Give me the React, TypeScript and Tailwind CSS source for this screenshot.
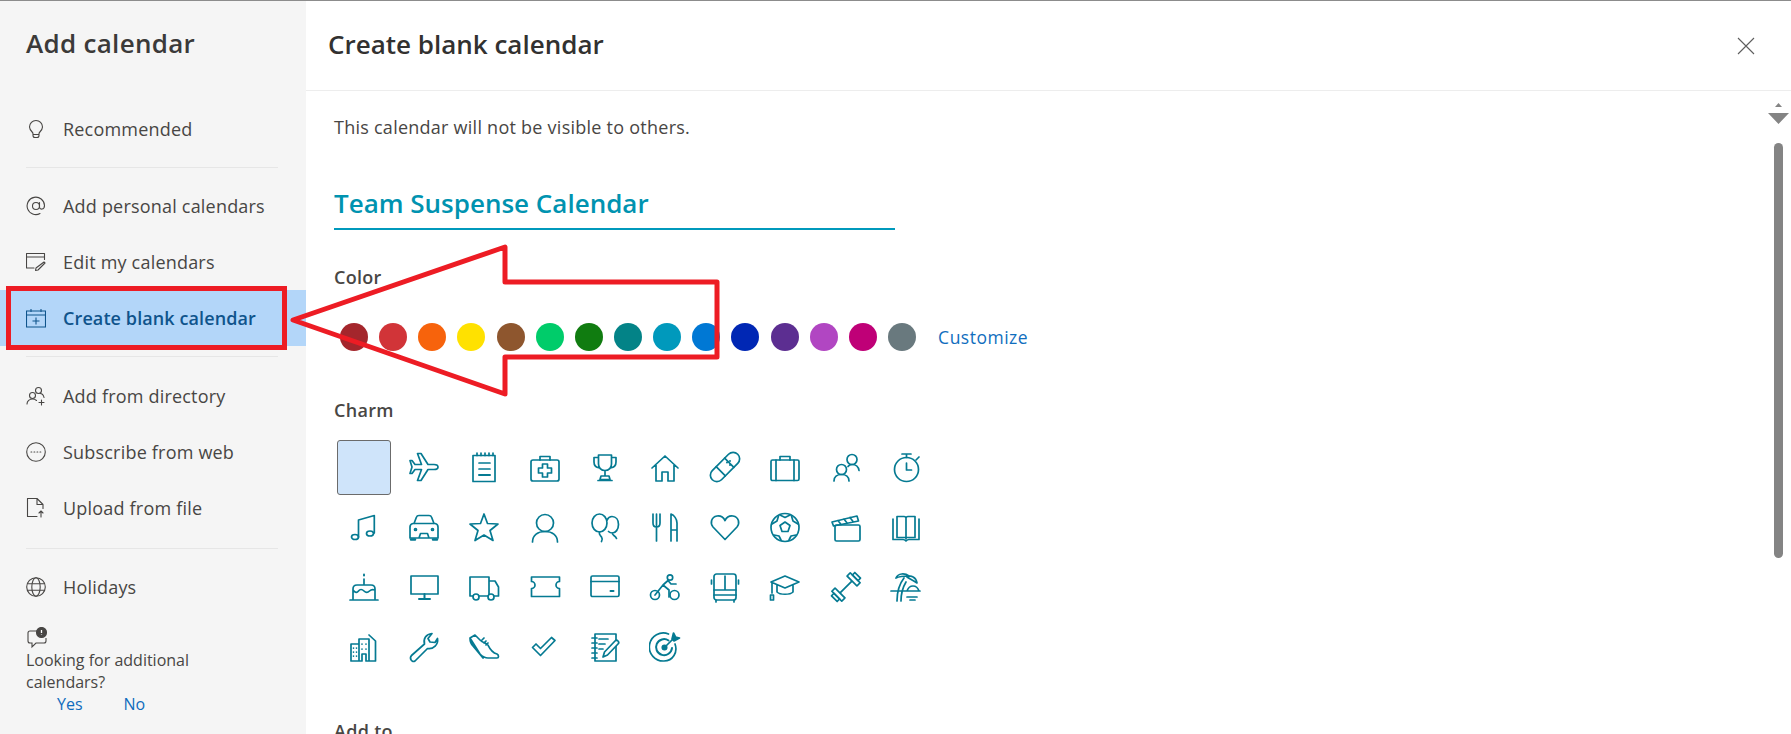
import React from "react";

const S = ({ children, fill }: { children: React.ReactNode; fill?: boolean }) => (
  <svg width="32" height="32" viewBox="0 0 32 32" fill={fill ? "#057a92" : "none"} stroke="#057a92" strokeWidth="1.700" strokeLinejoin="round" strokeLinecap="round">
    {children}
  </svg>
);

const charms: React.ReactNode[] = [
  null,
  <path d="M30 16c0-1.500-2-2.500-4-2.500h-6L13 2.500H9.500l4 11H7L4 9.500H2L4 16l-2 6.500h2l3-4h6.500l-4 11H13l7-11h6c2 0 4-1 4-2.500z" />,
  <><rect x="5" y="4.500" width="22" height="26" /><path d="M9 2v2.500M13 2v2.500M17 2v2.500M21 2v2.500M25 2v2.500M11 12h11M11 18h11" /><path d="M11 24h11" strokeWidth="2" /></>,
  <><rect x="2" y="9" width="28" height="21" rx="2" /><path d="M11 9V5.500h10V9M13.500 13h5v4h4v5h-4v4h-5v-4h-4v-5h4z" /></>,
  <><path d="M9.500 4h13v9c0 3.500-2.500 6.500-6.500 6.500S9.500 16.500 9.500 13zM9.500 6.500H5V11c0 3 2 5.500 5.500 6M22.500 6.500H27V11c0 3-2 5.500-5.500 6M16 19.500V25M12 25h8l1 3.500H11zM9 29.500h14" /></>,
  <path d="M3 17 16 5l13 12M7 14v16h6v-9h6v9h6V14" />,
  <><g transform="rotate(-45 16 16)"><rect x="-2" y="9.500" width="36" height="13" rx="6.500" /><path d="M10 9.500v13M22 9.500v13" /></g><path d="M18 11.500v.1M21 10v.1M21 14v.1" strokeWidth="2" /></>,
  <><rect x="2" y="9" width="28" height="20.500" rx="1.500" /><path d="M11 9V5.500h10V9M7 9v20.500M25 9v20.500" /></>,
  <><circle cx="22" cy="8.500" r="5" /><circle cx="11.500" cy="18.500" r="5" /><path d="M4 30c0-4 3-6.500 7.500-6.500S19 26 19 30M18 15.500c1-1.500 2.500-2 4-2 4 0 6.500 2.500 7 6" /></>,
  <><circle cx="16.500" cy="18.500" r="12" /><path d="M12 3h9M16.500 3v3.500M16.500 12v7h5M26 9l3-3" /></>,
  <><ellipse cx="7" cy="26" rx="3.500" ry="2.500" /><ellipse cx="22" cy="22.500" rx="3.500" ry="2.500" /><path d="M10.500 26V9l15.800-4.500V22" /></>,
  <><path d="M6 12.500 8.500 6Q9 4.500 11 4.500h10q2 0 2.500 1.500L26 12.500M5 12.500h22q3 .5 3 3.500v11H2V16q0-3 3-3.500zM11 27l1.500-4.500h7L21 27" /><path d="M3 28.500h4M25 28.500h4" strokeWidth="2.500" /><circle cx="7.500" cy="18.500" r="1" /><circle cx="24.500" cy="18.500" r="1" /></>,
  <path d="m16 3 3.500 9.500L30 13l-8 6.500 3 10-9-5.500-9 5.500 3-10L2 13l10.500-.5z" />,
  <><circle cx="16" cy="12" r="8.500" /><path d="M3.500 31c0-7 5.500-10.500 12.500-10.500S28.500 24 28.500 31" /></>,
  <><ellipse cx="10.500" cy="12" rx="7.500" ry="9" /><path d="M18 9c1-2 2.500-3.500 5-3.500 4 0 6.500 3.500 6.500 8 0 5-3 8.500-6 8.500-1.500 0-3-.5-4-1.500M10.500 21c-1 3 1 3.500 2 5s1 3 0 4.500M23.500 22c-1 2 3 2.500 4 5.500" /></>,
  <><path d="M4 3v9c0 3 2 4 3.500 4S11 15 11 12V3M7.500 3v27M22 30V3c3 1 6 5 6 9v7h-6M28 19v11" /></>,
  <path d="M16 28.500 4 16C1 12.500 2 6 8 5c3.500-.5 6.500 1.500 8 4.500C17.500 6.500 20.500 4.500 24 5c6 1 7 7.500 4 11z" />,
  <><circle cx="16" cy="16.500" r="14" /><path d="m16 11 5 3.500-2 6h-6l-2-6zM11 4l5 2.500L21 4M3 13l5-3 1.500-5M29 13l-5-3-1.500-5M5 24l5 1 2 4M27 24l-5 1-2 4" /></>,
  <><rect x="5" y="14" width="25" height="16" rx="1.500" /><path d="m2 11 25-6 1.500 5-25 5zM8 9.500l3 4M14 8l3 4M20 6.500l3 4" /></>,
  <><path d="M7 5.500h7c1 0 2 1 2 2 0-1 1-2 2-2h7v21H7zM16 8v20" /><path d="M3 8v20.500h10c1 0 2 .5 3 1.500 1-1 2-1.500 3-1.500h10V8" /></>,
  <><path d="M5 28V18q0-4 4-4h14q4 0 4 4v10M2 29h28M16 14V8M5 19c2.500 3 4 3 5.500 1s3.500-2 5.500 0 3.500 2 5.500 0 3-2 5.500-1" /><path d="M16 3.500v1" strokeWidth="2" /></>,
  <><rect x="3" y="5" width="27" height="18" /><path d="M16.500 23v4M11 28h11" strokeWidth="2" /></>,
  <><path d="M2 6h19v19H2zM21 10h6l3.500 6v9H21" /><circle cx="8" cy="26" r="3" fill="#fff" /><circle cx="23" cy="26" r="3" fill="#fff" /></>,
  <path d="M2.500 6h28v4.500a3.500 3.500 0 0 0 0 7v8h-28v-8a3.500 3.500 0 0 0 0-7z" />,
  <><rect x="2" y="5" width="28" height="20.500" rx="1.500" /><path d="M2 10.500h28" /><path d="M21.500 20h3" strokeWidth="2" /></>,
  <><circle cx="6" cy="24" r="4.500" /><circle cx="25.500" cy="24" r="4.500" /><circle cx="21" cy="6.500" r="2.700" /><path d="M6 24l8-10 5-4.500 3 3.500h5M14 14l6 5v7" /></>,
  <><rect x="5" y="3" width="22" height="26" rx="2.500" /><path d="M5 19h22M16 5v14M2.500 9v4M29.500 9v4M7 29v2M25 29v2M5 24h22" /></>,
  <><path d="M16 5 30 11l-14 6-14-6zM8 14v7c3 3 13 3 16 0v-7M3 11v11" /><rect x="1.500" y="24" width="3" height="5" /></>,
  <g transform="rotate(-45 16 16)"><path d="M8 16h16" /><rect x="3" y="9" width="4.500" height="14" /><rect x="24.500" y="9" width="4.500" height="14" /><rect x="-.5" y="12" width="3.500" height="8" /><rect x="29" y="12" width="3.500" height="8" /></g>,
  <><path d="M7 30c0-9 1.500-16 7-23M11 30c0-8 2-14 5-19M1 20h29M17 26h10M20 29h5M17 20c1-3 3-5 6-5s5 2 6 5M6 7c2-5 9-5 13-2-4 0-9 0-13 2zM17 6c4-2 9 0 10 6-4-3-7-4-10-6z" /></>,
  <><path d="M3 13h8v17H3zM11 13V8h10v22h-3v-7h-4v7h-3M21 4l6.500 6v20H21M5.500 17v.1M8.500 17v.1M5.500 21v.1M8.500 21v.1M5.500 25v.1M8.500 25v.1M14 13v.1M18 13v.1M14 18v.1M18 18v.1" /></>,
  <path d="M3.500 24.500 16.500 13C15 8 18 3 24 2.500l-4 5 2 3.500 5 .5 2.500-4c1 6-4 11-10 10L7 30c-3 2-6-2.500-3.500-5.500z" />,
  <><path d="M2 7l5-3 5 5c3 3 6 3 8 5 1 2 3 7 9 9 2 1 2 4 0 4h-9c-4 0-6-2-8-4zM2 7c0 4 1 6 3 8l10 12M14 9l2-2M16 12l2-2M18 14l2-2" /></>,
  <path d="m3.500 16.500 8 8L26 9.500l-3.500-3-11 11L7 13z" />,
  <><path d="M6 3h21v27H6M6 3v27M3 7h5M3 12h5M3 17h5M3 22h5M3 27h5M10 8h9M10 13h6M10 18h4" /><path d="M14 26l1.500-5L26 10c2-2 5 1 3 3L18.500 24z" fill="#fff" /></>,
  <><path d="M26 13c3 8-2 17-11 17A14 14 0 1 1 19.500 3" /><path d="M19.500 9.500A8 8 0 1 0 23 17" strokeWidth="2" /><circle cx="15.500" cy="16.500" r="2.200" fill="#057a92" /><path d="M16 16 26 6" /><path d="m23 8 1.500-6 2 4 4 1-5.500 3z" fill="#057a92" /></>,
];

const I = ({ children }: { children: React.ReactNode }) => (
  <svg width="20" height="20" viewBox="0 0 20 20" fill="none" stroke="#484644" strokeWidth="1.100" strokeLinecap="round" strokeLinejoin="round">
    {children}
  </svg>
);

const bulb = <I><path d="M6.500 13.500C5 12 3.500 10.500 3.500 8a6.500 6.500 0 0 1 13 0c0 2.500-1.500 4-3 5.500-.5.500-.5 1-.5 1.500v1.500c0 1-1 2-2 2H9c-1 0-2-1-2-2V15c0-.5 0-1-.5-1.500zM7 15.500h6" /></I>;
const at = <I><circle cx="10" cy="10" r="3.500" /><path d="M13.500 6.500V11c0 3 5 3 5-1.500A8.700 8.700 0 1 0 14 17.500" /></I>;
const edit = <I><path d="M18.500 7.500V1.500h-18V16H8M.5 5h18M18 10l1 1-7 7-2.500.5.500-2.500z" /></I>;
const cal = <svg width="20" height="20" viewBox="0 0 20 20" fill="none" stroke="#0f548c" strokeWidth="1.100"><path d="M.5 3h19v16H.5zM.5 7h19M5 1v3M15 1v3M10 9.500v7M6.500 13h7" /></svg>;
const dir = <I><circle cx="12.500" cy="4.500" r="3" /><circle cx="6.500" cy="9.500" r="3" /><path d="M1 18c0-3 2.500-5 5.500-5 2 0 3 .5 4 1.500M14 7.500c1.500 0 3.500 1.500 4 4M15.500 14v5M13 16.500h5" /></I>;
const sub = <I><circle cx="10" cy="10" r="9.300" /><path d="M5 10h.8M8 10h.8M11 10h.8M14 10h.8" /></I>;
const up = <I><path d="M11 18.500H1.500V.5h9.500l6 6v4M11 .5V6.500h6M15 19v-6M13 15l2-2 2 2" /></I>;
const globe = <I><circle cx="10" cy="10" r="9.300" /><ellipse cx="10" cy="10" rx="4.200" ry="9.300" /><path d="M1.500 6.800h17M1.500 13.200h17" /></I>;

const Item = ({ icon, label, active }: { icon: React.ReactNode; label: string; active?: boolean }) => (
  <div className={`h-[56px] flex items-center pl-[26px] gap-[17px] text-[18px] ${active ? "bg-[#b3d6f9] text-[#0f548c] font-semibold tracking-[0.100px]" : "text-[#484644] tracking-[0.200px]"}`}>
    <span className="w-[20px] h-[20px] shrink-0 flex">{icon}</span>
    <span className="pt-[1px]">{label}</span>
  </div>
);

const Divider = ({ className }: { className: string }) => <div className={`ml-[26px] w-[252px] h-px bg-[#e6e6e6] ${className}`} />;

const colors = ["#a4262c", "#d13438", "#f7630c", "#ffe100", "#8e562e", "#00cc6a", "#107c10", "#038387", "#0099bc", "#0078d4", "#0027b4", "#5c2e91", "#b146c2", "#bf0077", "#69797e"];

export default function App() {
  return (
    <div className="relative w-[1791px] h-[734px] overflow-hidden flex bg-white border-t border-[#8c8c8c] font-['Open_Sans','Noto_Sans',sans-serif]">
      <aside className="w-[306px] shrink-0 bg-[#f5f5f5] flex flex-col">
        <div className="h-[100px] pl-[26px] pt-[20px] text-[26px] leading-[44px] font-semibold tracking-[0.300px] text-[#3b3a39]">Add calendar</div>
        <Item icon={bulb} label="Recommended" />
        <Divider className="mt-[10px] mb-[10px]" />
        <Item icon={at} label="Add personal calendars" />
        <Item icon={edit} label="Edit my calendars" />
        <Item icon={cal} label="Create blank calendar" active />
        <Divider className="mt-[10px] mb-[11px]" />
        <Item icon={dir} label="Add from directory" />
        <Item icon={sub} label="Subscribe from web" />
        <Item icon={up} label="Upload from file" />
        <Divider className="mt-[12px] mb-[10px]" />
        <Item icon={globe} label="Holidays" />
        <div className="pl-[26px] pt-[12px]">
          <svg width="22" height="22" viewBox="0 0 22 22" fill="none" stroke="#484644" strokeWidth="1.100">
            <path d="M12 4H4Q2 4 2 6v8q0 2 2 2h2v4l4-4h8q2 0 2-2v-3" />
            <circle cx="15.500" cy="5.500" r="5" fill="#484644" />
            <path d="M15.500 3v3M15.500 7.500v.5" stroke="#fff" strokeWidth="1.300" />
          </svg>
          <div className="w-[200px] text-[16px] leading-[22px] text-[#484644]">Looking for additional calendars?</div>
          <div className="flex text-[16px] leading-[22px] text-[#0f6cbd] pl-[31px] gap-[41px]">
            <span>Yes</span>
            <span>No</span>
          </div>
        </div>
      </aside>
      <main className="flex-1 flex flex-col min-w-0">
        <header className="h-[90px] shrink-0 border-b border-[#ededed] pl-[22px] pr-[36px] flex items-center justify-between">
          <h1 className="text-[26px] font-semibold text-[#323130] -mt-[2px]">Create blank calendar</h1>
          <svg width="18" height="18" viewBox="0 0 18 18" stroke="#5e5e5e" strokeWidth="1.100"><path d="M1 1l16 16M17 1 1 17" /></svg>
        </header>
        <div className="pl-[28px] flex flex-col">
          <p className="mt-[24px] text-[18px] leading-[24px] tracking-[0.250px] text-[#484644]">This calendar will not be visible to others.</p>
          <div className="mt-[46px] w-[561px] h-[45px] border-b-2 border-[#0099bc] text-[26px] font-semibold leading-[36px] text-[#0093b0]">Team Suspense Calendar</div>
          <div className="mt-[35px] text-[18px] leading-[24px] font-semibold tracking-[0.300px] text-[#484644]">Color</div>
          <div className="mt-[34px] flex items-center pl-[6px]">
            {colors.map((c) => (
              <span key={c} className="w-[28px] h-[28px] rounded-full mr-[11.150px] shrink-0" style={{ backgroundColor: c }} />
            ))}
            <span className="ml-[11px] text-[17.500px] tracking-[0.500px] text-[#106ebe]">Customize</span>
          </div>
          <div className="mt-[47px] text-[18px] leading-[24px] font-semibold tracking-[0.300px] text-[#484644]">Charm</div>
          <div className="mt-[15px] grid grid-cols-[repeat(10,60.200px)] auto-rows-[60px] justify-start">
            {charms.map((c, i) => (
              <div key={i} className="flex items-center justify-center">
                {c === null ? <div className="w-[54px] h-[55px] bg-[#cfe4fa] border border-[#6b6b6b] rounded-[3px]" /> : <S>{c}</S>}
              </div>
            ))}
          </div>
          <div className="mt-[42px] text-[18px] leading-[24px] font-semibold tracking-[0.300px] text-[#484644]">Add to</div>
        </div>
      </main>

      <div className="absolute left-[350px] -top-px w-[490px] h-px bg-[#444]" />
      <div className="absolute left-[1774px] top-[142px] w-[9px] h-[415px] rounded-full bg-[#848484]" />
      <svg className="absolute left-[1766px] top-[99px]" width="25" height="26" viewBox="0 0 25 26" fill="#848484">
        <path d="M9 7h7l-3.500-4zM2 13h21l-10.500 11z" />
      </svg>
      <svg className="absolute left-0 -top-px pointer-events-none" width="730" height="400" viewBox="0 0 730 400" fill="none" stroke="#ed1c24" strokeWidth="5">
        <rect x="8.500" y="288.500" width="276" height="59" strokeWidth="5" />
        <path d="M293 320 505 247v35h212v75H505v37z" strokeLinejoin="round" />
      </svg>
    </div>
  );
}
